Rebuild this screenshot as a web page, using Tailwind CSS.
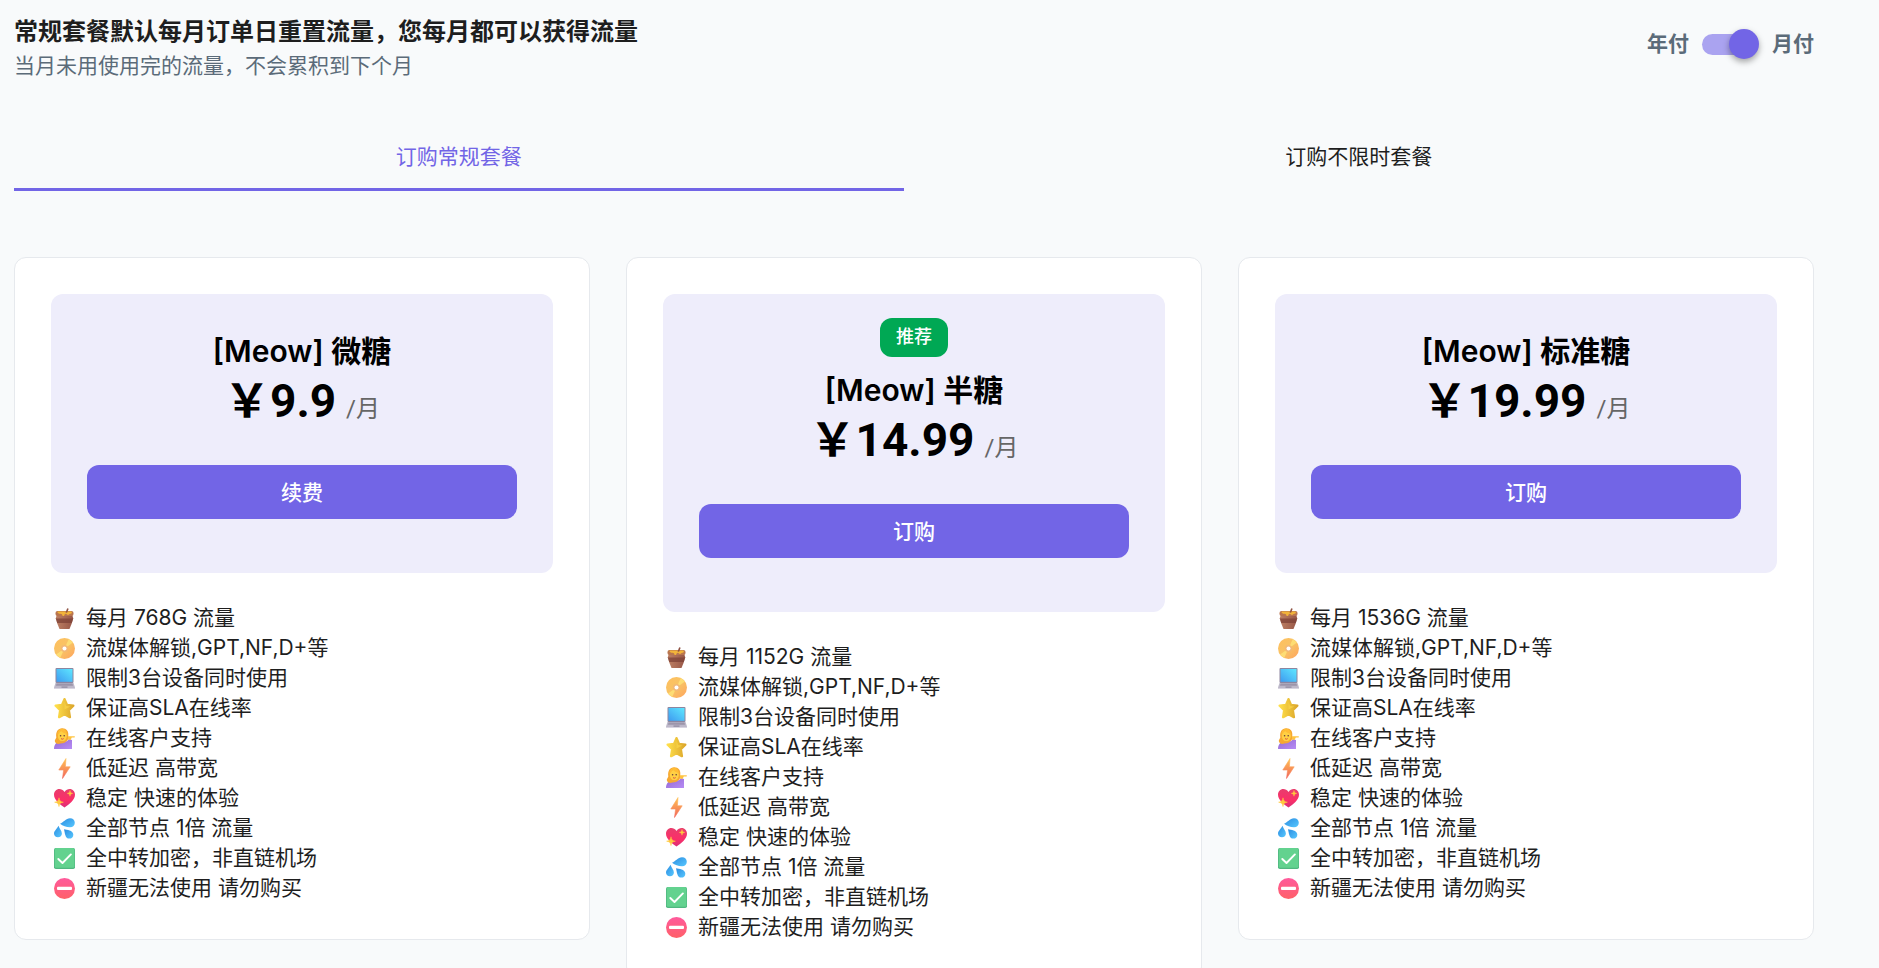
<!DOCTYPE html>
<html lang="zh-CN">
<head>
<meta charset="utf-8">
<meta name="viewport" content="width=device-width, initial-scale=1">
<title>订购套餐</title>
<script src="https://cdn.jsdelivr.net/npm/@tailwindcss/browser@4"></script>
</head>
<body class="bg-[#f8fafb] text-[21px] leading-[30px] text-[#1e1e1e] font-[Inter,'Noto_Sans_CJK_SC',sans-serif]">

<svg class="absolute size-0" aria-hidden="true">
  <defs>
    <linearGradient id="g-pot" x1="0" x2="1"><stop offset="0" stop-color="#bd8064"/><stop offset="1" stop-color="#975647"/></linearGradient>
    <linearGradient id="g-disc" x1="0" y1="0" x2="1" y2="1"><stop offset="0" stop-color="#ffbf5e"/><stop offset=".5" stop-color="#f8c365"/><stop offset="1" stop-color="#ffa35e"/></linearGradient>
    <linearGradient id="g-screen" x1="0" y1="1" x2="1" y2="0"><stop offset="0" stop-color="#3e9bf0"/><stop offset="1" stop-color="#5ee7ff"/></linearGradient>
    <linearGradient id="g-star" x1="0" x2="1"><stop offset="0" stop-color="#ffdf4a"/><stop offset="1" stop-color="#dca72c"/></linearGradient>
    <linearGradient id="g-bolt" x1="0" y1="0" x2="0" y2="1"><stop offset="0" stop-color="#ffc252"/><stop offset="1" stop-color="#f2665c"/></linearGradient>
    <linearGradient id="g-heart" x1="0" y1="0" x2="0" y2="1"><stop offset="0" stop-color="#e83d6d"/><stop offset=".6" stop-color="#fb2f68"/><stop offset="1" stop-color="#d92f78"/></linearGradient>
    <linearGradient id="g-drop" x1="0" y1="0" x2="1" y2="1"><stop offset="0" stop-color="#2b8ce0"/><stop offset="1" stop-color="#58c8ff"/></linearGradient>
    <linearGradient id="g-no" x1="0" y1="0" x2="0" y2="1"><stop offset="0" stop-color="#ff5a9c"/><stop offset="1" stop-color="#ff6068"/></linearGradient>
    <linearGradient id="g-shirt" x1="0" y1="0" x2="1" y2="1"><stop offset="0" stop-color="#9268d2"/><stop offset="1" stop-color="#b78cf5"/></linearGradient>
  </defs>
  <symbol id="i-pot" viewBox="0 0 21 21">
    <path d="M3 6h15l1.200 4.200-1.500 5.300L15.500 21h-10L3.300 15.500 1.800 10.200z" fill="url(#g-pot)"/>
    <path d="M1.800 10.500h17.400l-1.400 4.500H3.200z" fill="#7d4237" opacity=".75"/>
    <rect x="1.500" y="3" width="18" height="5" rx="2" fill="#b9754f"/>
    <path d="M4 3.600h13c.8 0 1.100 1 .6 1.700-.9 1-1.900.2-2.600 1.100-.5.700-1.700.6-2 0-.5-.8-1.700-.8-2.400 0-.5 2.200-2.300 2.200-2.500.2-.5-1-2.300-.3-3.800-1.300-1-.7-1-1.700-.3-1.700z" fill="#f2b43a"/>
    <path d="M11.500 4.500 13.200.3l1.500.5-1.600 4z" fill="#8e5142"/>
  </symbol>
  <symbol id="i-disc" viewBox="0 0 21 21">
    <circle cx="10.500" cy="10.500" r="10.500" fill="url(#g-disc)"/>
    <path d="M10.500 10.500 14.800 1 19 4.400zM10.500 10.500 6.200 20 2 16.600z" fill="#ffe67a" opacity=".75"/>
    <circle cx="10.500" cy="10.500" r="3.600" fill="#f2b877"/><circle cx="10.500" cy="10.500" r="2" fill="#fff"/>
  </symbol>
  <symbol id="i-laptop" viewBox="0 0 21 21">
    <rect x="1.500" y="0" width="18" height="15" rx="1" fill="#8d86a0"/>
    <rect x="2.500" y="1" width="16" height="12.800" fill="url(#g-screen)"/>
    <path d="M1.500 15h18l1.500 4.500V21H0v-1.500z" fill="#bdb8c9"/>
    <path d="M2.600 15.600h15.800l.7 2.200H1.900z" fill="#9c95aa"/>
    <path d="M7.500 18.500h6v1.200h-6z" fill="#8f889e"/><path d="M0 20h21v1H0z" fill="#d8d4e0"/>
  </symbol>
  <symbol id="i-star" viewBox="0 0 21 21">
    <path d="M10.500 1.200 13 6.900l6.300.8-4.500 4.500 1.100 6.900-5.400-3-5.400 3 1.100-6.900L1.700 7.700 8 6.900z" fill="url(#g-star)" stroke="url(#g-star)" stroke-width="2.400" stroke-linejoin="round"/>
    <path d="M10.500 3.500 12 8l4.500.6-6 3z" fill="#fbd84b" opacity=".6"/>
  </symbol>
  <symbol id="i-lady" viewBox="0 0 21 21">
    <path d="M0 21c0-4.500 2.500-7.500 7-7.500h4c2 0 3-.8 3.800-2.500l3.200 1v9z" fill="url(#g-shirt)"/>
    <path d="M2.300 9.500C1.500 4 3.800.2 8.300.2c4.200 0 6.400 3 6 6.800-.2 2 .3 3.500-.8 5.500l-3 2.300L4 16c-2-.5-3.500-2-3.200-3.500z" fill="#f6a831"/>
    <ellipse cx="8.300" cy="8" rx="4.500" ry="5.200" fill="#ffd044"/>
    <path d="M3.300 7C5 5.500 6 4.500 6.500 2.500 8 4.500 10.500 5.500 13 6.200 12.500 2.500 10.500.8 8 .8S3.500 3 3.300 7z" fill="#ffbc35"/>
    <path d="M14 8.200h6.300c.9 0 .9 1.300 0 1.300h-2.500l-1.300 2.500-2.500-.4z" fill="#ffc440"/>
    <circle cx="6.600" cy="7.800" r=".8" fill="#66403f"/><circle cx="10.200" cy="7.800" r=".8" fill="#66403f"/>
    <path d="M7 10.600q1.400 1.200 2.700 0" fill="none" stroke="#d95148" stroke-width="1"/>
    <path d="M6 13h4.500l-2 2.600z" fill="#f2a93a"/>
  </symbol>
  <symbol id="i-bolt" viewBox="0 0 21 21">
    <path d="M12 .5 4.800 12h4.800L8.500 20.500 16.200 8.800h-4.800z" fill="url(#g-bolt)" stroke="url(#g-bolt)" stroke-width=".6" stroke-linejoin="round"/>
  </symbol>
  <symbol id="i-heart" viewBox="0 0 21 21">
    <path d="M10.500 4C9 1.800 7.300 1 5.400 1 2.200 1 0 3.500 0 6.700c0 5.300 6 9.800 10.500 12.800C15 16.500 21 12 21 6.700 21 3.500 18.800 1 15.600 1c-1.900 0-3.600.8-5.100 3z" fill="url(#g-heart)"/>
    <path d="M16 2.500c.3 2 .9 2.600 2.700 2.900-1.800.3-2.400.9-2.700 2.800-.3-1.900-.9-2.500-2.700-2.800 1.800-.3 2.400-.9 2.700-2.900zM5 9.800c.5 3 1.400 3.900 4.400 4.400-3 .5-3.900 1.400-4.400 4.400-.5-3-1.400-3.900-4.400-4.400 3-.5 3.900-1.400 4.400-4.400z" fill="#ffc93f" stroke="#ffc93f" stroke-width=".5"/>
  </symbol>
  <symbol id="i-drops" viewBox="0 0 21 21">
    <path d="M6 5.800C9 4.800 12 .3 16 .3c3 0 4.800 2 4.800 4.500S19 9.300 16 9.300c-4 0-7-1.500-10-3.500z" fill="url(#g-drop)"/>
    <path d="M4.500 7.800c.8 3 3.400 5 3.400 7.800 0 2.200-1.600 3.700-3.900 3.700S0 17.800 0 15.600c0-2.800 3.200-4.800 4.500-7.800z" fill="url(#g-drop)"/>
    <path d="M10 11.200c3 .8 9 .8 9.300 5.200.2 2.400-1.500 4.200-4 4.200-4.300 0-4.300-5.600-5.300-9.400z" fill="url(#g-drop)"/>
  </symbol>
  <symbol id="i-check" viewBox="0 0 21 21">
    <rect width="21" height="21" rx="1.800" fill="#50b780"/><rect x=".8" width="19.600" height="19.800" rx="1.500" fill="#63d28f"/>
    <path d="m4.300 11 4.200 4 8.400-8.600" fill="none" stroke="#fff" stroke-width="1.900" stroke-linecap="round" stroke-linejoin="round"/>
  </symbol>
  <symbol id="i-no" viewBox="0 0 21 21">
    <circle cx="10.500" cy="10.500" r="10.500" fill="url(#g-no)"/><rect x="3" y="8.800" width="15" height="3.200" rx="1" fill="#fff"/>
  </symbol>
</svg>

<main class="pt-[14px] pl-[14px] pr-[65px] pb-9">
  <header class="flex items-center justify-between">
    <div>
      <h1 class="text-2xl leading-9 font-bold">常规套餐默认每月订单日重置流量，您每月都可以获得流量</h1>
      <p class="leading-8 text-[#5b6b79]">当月未用使用完的流量，不会累积到下个月</p>
    </div>
    <div class="flex items-center gap-[13px] pb-2 font-semibold text-[#5b6b79]">
      <label for="cycle">年付</label>
      <input id="cycle" type="checkbox" role="switch" checked aria-label="月付" class="relative h-[30px] w-[57px] appearance-none before:absolute before:top-[5px] before:left-0 before:h-[21px] before:w-[51px] before:rounded-full before:bg-[#aaa3f0] after:absolute after:top-0 after:left-0 after:size-[30px] after:rounded-full after:bg-[#7265e6] after:shadow-[0_3px_6px_rgba(0,0,0,0.35)] checked:after:left-[27px]">
      <label for="cycle">月付</label>
    </div>
  </header>

  <div role="tablist" class="mt-[37px] flex">
    <button role="tab" aria-selected="true" class="h-[72px] flex-auto border-b-3 border-[#7265e6] pt-1.5 text-[#7265e6]">订购常规套餐</button>
    <button role="tab" aria-selected="false" class="h-[72px] flex-auto border-b-3 border-transparent pt-1.5">订购不限时套餐</button>
  </div>

  <div id="plans" class="mt-[66px] grid grid-cols-3 items-start gap-9"></div>
</main>

<script>
  const plans = [
    { name: '微糖', price: '9.9', traffic: '768G', action: '续费' },
    { name: '半糖', price: '14.99', traffic: '1152G', action: '订购', tag: '推荐' },
    { name: '标准糖', price: '19.99', traffic: '1536G', action: '订购' },
  ];
  const features = [
    ['disc', '流媒体解锁,GPT,NF,D+等'],
    ['laptop', '限制3台设备同时使用'],
    ['star', '保证高SLA在线率'],
    ['lady', '在线客户支持'],
    ['bolt', '低延迟 高带宽'],
    ['heart', '稳定 快速的体验'],
    ['drops', '全部节点 1倍 流量'],
    ['check', '全中转加密，非直链机场'],
    ['no', '新疆无法使用 请勿购买'],
  ];
  const row = ([icon, text]) => `
    <li class="flex items-center gap-[11px]">
      <svg class="size-[21px] shrink-0" aria-hidden="true"><use href="#i-${icon}"/></svg>
      <span>${text}</span>
    </li>`;
  document.getElementById('plans').innerHTML = plans.map(p => `
    <article class="rounded-xl border border-[#e6e9ed] bg-white p-9">
      <div class="flex flex-col items-center rounded-xl bg-[#eeedfb] px-9 pt-[35px] pb-[54px] text-black">
        ${p.tag ? `<span class="-mt-[11px] mb-[11px] h-[39px] rounded-xl bg-[#00a854] px-4 text-lg leading-[38px] font-medium text-white">${p.tag}</span>` : ''}
        <h2 class="text-[30px] leading-[45px] font-semibold">[Meow] ${p.name}</h2>
        <p class="flex items-baseline gap-2.5 text-[46px] leading-[54px] font-bold font-[Roboto,'Noto_Sans_CJK_SC',sans-serif]">￥${p.price}<span class="text-2xl font-normal text-[#666]">/月</span></p>
        <button class="mt-[37px] h-[54px] w-full rounded-xl bg-[#7265e6] pt-0.5 font-medium text-white">${p.action}</button>
      </div>
      <ul class="mt-[30px] pl-[3px]">${[['pot', `每月 ${p.traffic} 流量`], ...features].map(row).join('')}</ul>
    </article>`).join('');
</script>
</body>
</html>
